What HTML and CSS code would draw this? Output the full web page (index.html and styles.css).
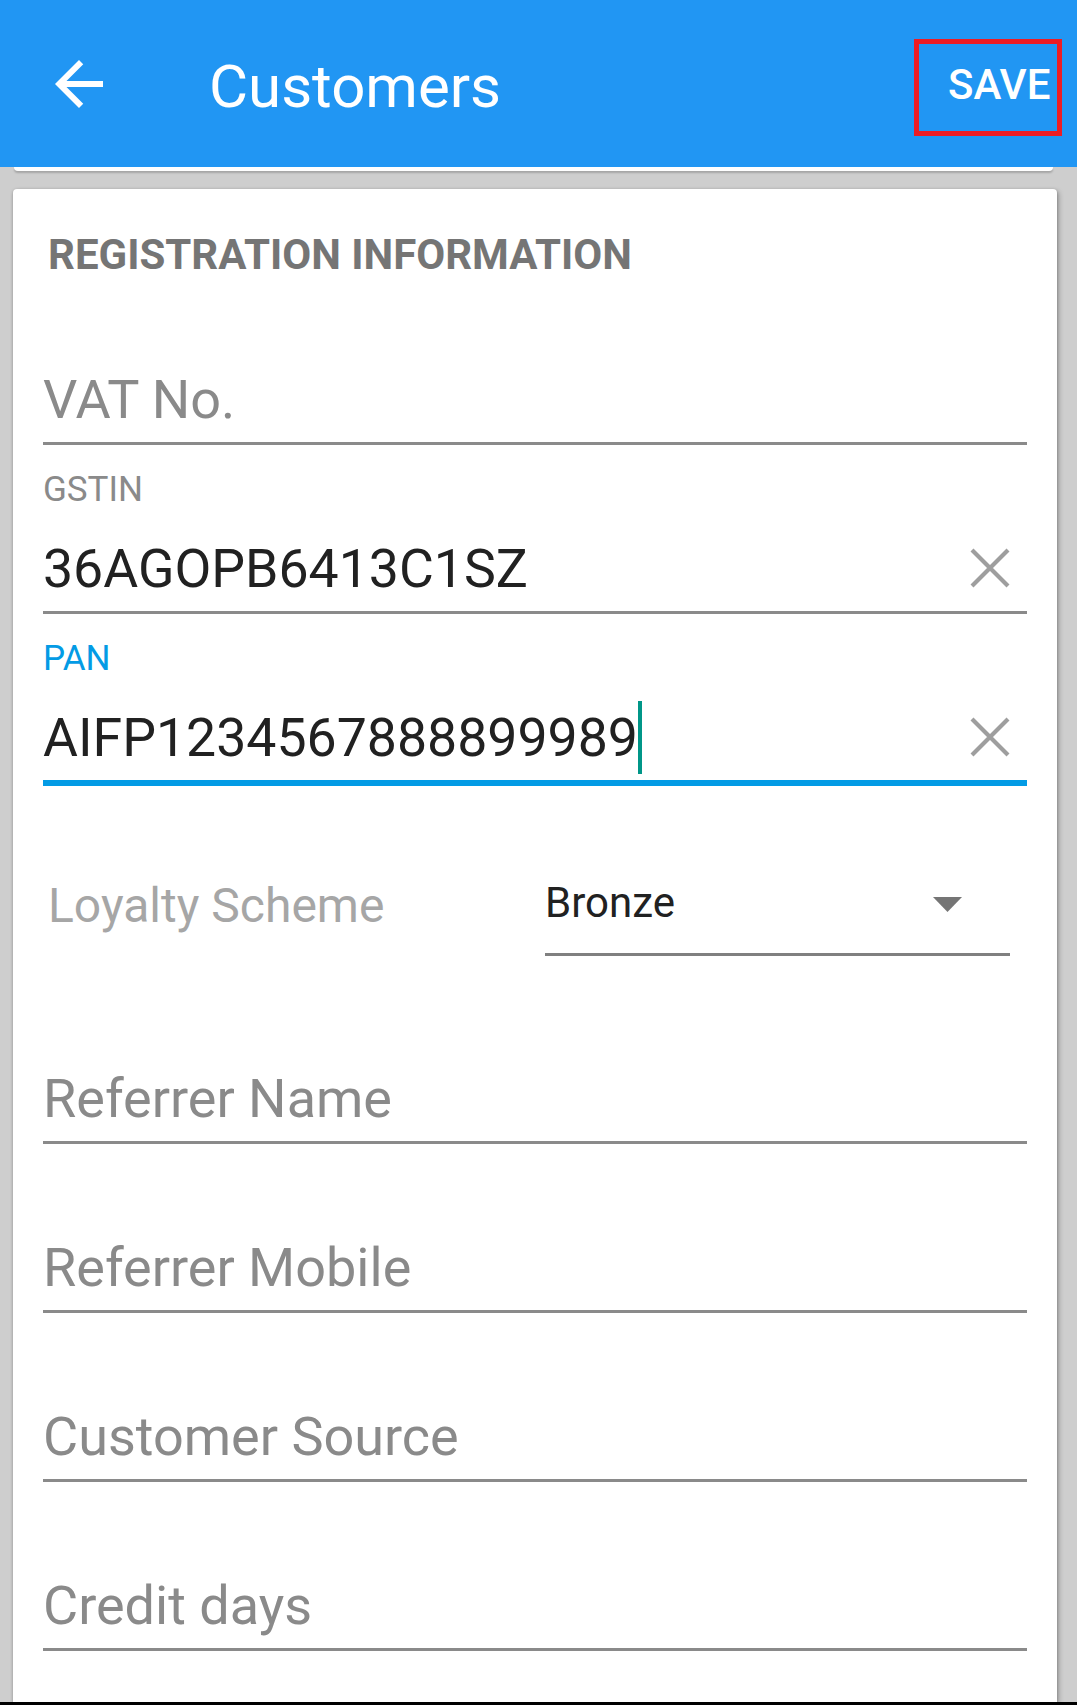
FILE: index.html
```html
<!DOCTYPE html>
<html lang="en">
<head>
  <meta charset="UTF-8" />
  <title>Customers</title>
  <link rel="stylesheet" href="styles.css">
</head>
<body>
  <div class="screen">
    <header class="toolbar">
      <button class="back-btn" aria-label="Back">
        <svg viewBox="0 0 24 24" width="72" height="72">
          <path d="M20 11H7.83l5.59-5.59L12 4l-8 8 8 8 1.41-1.41L7.83 13H20v-2z" fill="#fff"/>
        </svg>
      </button>
      <h1 class="toolbar-title">Customers</h1>
      <button class="save-btn">SAVE</button>
    </header>
    <div class="prev-card"></div>
    <div class="card">
      <h2 class="section-title">REGISTRATION INFORMATION</h2>

      <div class="field">
        <div class="field-label"></div>
        <div class="field-input"><span class="hint">VAT No.</span></div>
      </div>

      <div class="field">
        <div class="field-label">GSTIN</div>
        <div class="field-input">
          <span class="value">36AGOPB6413C1SZ</span>
          <span class="clear-btn">
            <svg viewBox="0 0 40 40" width="40" height="40">
              <path d="M2 2L38 38M38 2L2 38" stroke="#9e9e9e" stroke-width="4.2"/>
            </svg>
          </span>
        </div>
      </div>

      <div class="field focused">
        <div class="field-label">PAN</div>
        <div class="field-input">
          <span class="value">AIFP1234567888899989</span>
          <span class="cursor"></span>
          <span class="clear-btn">
            <svg viewBox="0 0 40 40" width="40" height="40">
              <path d="M2 2L38 38M38 2L2 38" stroke="#9e9e9e" stroke-width="4.2"/>
            </svg>
          </span>
        </div>
      </div>

      <div class="spinner-row">
        <div class="spinner-label">Loyalty Scheme</div>
        <div class="spinner">
          <span class="spinner-value">Bronze</span>
          <svg class="spinner-arrow" viewBox="0 0 29 15" width="29" height="15">
            <polygon points="0,0 29,0 14.5,15" fill="#757575"/>
          </svg>
        </div>
      </div>

      <div class="field after-spinner">
        <div class="field-label"></div>
        <div class="field-input"><span class="hint">Referrer Name</span></div>
      </div>

      <div class="field">
        <div class="field-label"></div>
        <div class="field-input"><span class="hint">Referrer Mobile</span></div>
      </div>

      <div class="field">
        <div class="field-label"></div>
        <div class="field-input"><span class="hint">Customer Source</span></div>
      </div>

      <div class="field">
        <div class="field-label"></div>
        <div class="field-input"><span class="hint">Credit days</span></div>
      </div>
    </div>
    <div class="nav-edge"></div>
  </div>
</body>
</html>
```

FILE: styles.css
```css
body {
  margin: 0;
  background: #cecece;
  font-family: Roboto, "Liberation Sans", sans-serif;
  height: 1705px;
  overflow: hidden;
}
.screen {
  display: flex;
  flex-direction: column;
  height: 1705px;
}
.toolbar {
  flex: 0 0 167px;
  box-sizing: border-box;
  background: #2196f3;
  display: flex;
  align-items: center;
  padding: 0 15px 0 43px;
}
.back-btn {
  width: 72px;
  height: 72px;
  padding: 0;
  border: none;
  background: none;
  display: flex;
}
.toolbar-title {
  margin: 6px 0 0 94px;
  font-size: 60px;
  line-height: 70px;
  font-weight: 400;
  color: #fff;
}
.save-btn {
  margin: 7px 0 0 auto;
  width: 148px;
  height: 97px;
  box-sizing: border-box;
  border: 5px solid #ed1c24;
  background: none;
  padding: 0 0 5px 29px;
  text-align: left;
  font-family: Roboto, "Liberation Sans", sans-serif;
  font-size: 42px;
  line-height: 50px;
  font-weight: 500;
  color: #fff;
}
.prev-card {
  flex: 0 0 4px;
  margin: 0 24px 0 14px;
  background: #fff;
  border-radius: 0 0 4px 4px;
  box-shadow: 0 2px 2px rgba(0,0,0,0.2);
}
.card {
  flex: 1;
  margin: 18px 20px 0 13px;
  padding: 45px 30px 0;
  background: #fff;
  border-radius: 4px 4px 0 0;
  box-shadow: 0 1px 3px rgba(0,0,0,0.25), 2px 2px 5px rgba(0,0,0,0.25);
  overflow: hidden;
}
.section-title {
  margin: 0;
  padding-left: 5px;
  font-size: 42px;
  line-height: 42px;
  font-weight: 700;
  color: #757575;
}
.field {
  padding-top: 25px;
}
.field-label {
  height: 40px;
  margin-bottom: 27px;
  font-size: 35px;
  line-height: 40px;
  color: #8a8a8a;
}
.field-input {
  display: flex;
  align-items: flex-start;
  height: 74px;
  border-bottom: 3px solid #8a8a8a;
}
.value, .hint {
  font-size: 54px;
  line-height: 64px;
  white-space: nowrap;
}
.value {
  font-size: 53.6px;
  color: #212121;
}
.hint {
  color: #8a8a8a;
}
.clear-btn {
  margin: 11px 17px 0 auto;
  width: 40px;
  height: 40px;
  display: flex;
}
.cursor {
  width: 4px;
  height: 73px;
  margin: -5px 0 0 0;
  background: #009688;
}
.field.focused .field-label {
  color: #039be5;
}
.field.focused .field-input {
  border-bottom: 6px solid #039be5;
}
.spinner-row {
  display: flex;
  align-items: flex-start;
  margin-top: 92px;
}
.spinner-label {
  flex: 0 0 502px;
  box-sizing: border-box;
  padding-left: 5px;
  font-size: 48px;
  line-height: 56px;
  color: #a6a6a6;
}
.spinner {
  width: 465px;
  display: flex;
  align-items: flex-start;
  padding-bottom: 25px;
  border-bottom: 3px solid #808080;
}
.spinner-value {
  font-size: 42px;
  line-height: 50px;
  color: #212121;
}
.spinner-arrow {
  margin: 19px 48px 0 auto;
}
.field.after-spinner {
  margin-top: 19px;
}
.nav-edge {
  flex: 0 0 3px;
  background: #000;
}
```
